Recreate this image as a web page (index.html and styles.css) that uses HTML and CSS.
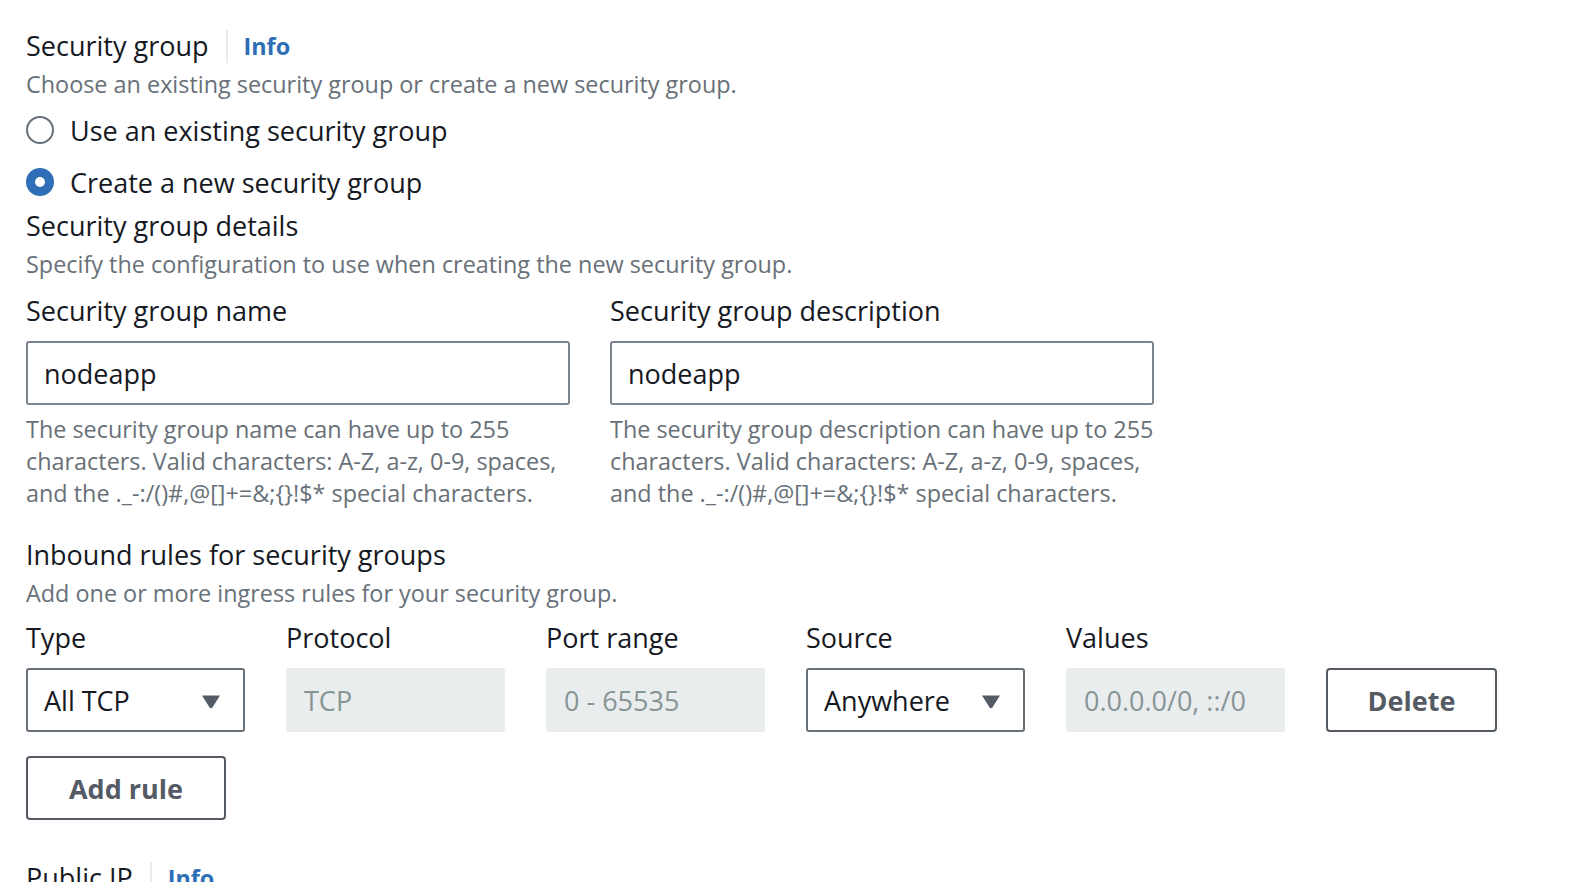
FILE: index.html
```html
<!DOCTYPE html>
<html lang="en">
<head>
<meta charset="utf-8">
<title>Security group</title>
<link rel="stylesheet" href="styles.css">
</head>
<body>
<main class="form">
  <section class="field">
    <div class="field-header">
      <span class="label">Security group</span>
      <span class="sep"></span>
      <a class="info">Info</a>
    </div>
    <p class="desc">Choose an existing security group or create a new security group.</p>
    <div class="radios">
      <label class="radio"><span class="dot"></span><span>Use an existing security group</span></label>
      <label class="radio checked"><span class="dot"></span><span>Create a new security group</span></label>
    </div>
  </section>

  <section class="group">
    <div class="label">Security group details</div>
    <p class="desc">Specify the configuration to use when creating the new security group.</p>
    <div class="pair">
      <div class="col">
        <div class="label">Security group name</div>
        <div class="input">nodeapp</div>
        <p class="desc constraint">The security group name can have up to 255 characters. Valid characters: A-Z, a-z, 0-9, spaces, and the ._-:/()#,@[]+=&amp;;{}!$* special characters.</p>
      </div>
      <div class="col">
        <div class="label">Security group description</div>
        <div class="input">nodeapp</div>
        <p class="desc constraint">The security group description can have up to 255 characters. Valid characters: A-Z, a-z, 0-9, spaces, and the ._-:/()#,@[]+=&amp;;{}!$* special characters.</p>
      </div>
    </div>
  </section>

  <section class="rules">
    <div class="label">Inbound rules for security groups</div>
    <p class="desc">Add one or more ingress rules for your security group.</p>
    <div class="rule-grid">
      <div class="label">Type</div>
      <div class="label">Protocol</div>
      <div class="label">Port range</div>
      <div class="label">Source</div>
      <div class="label">Values</div>
      <div></div>
      <div class="select">All TCP<svg class="caret" viewBox="0 0 20 15"><path d="M1 1.5h18l-7.6 12a1.6 1.6 0 0 1-2.8 0z"/></svg></div>
      <div class="disabled">TCP</div>
      <div class="disabled">0 - 65535</div>
      <div class="select">Anywhere<svg class="caret" viewBox="0 0 20 15"><path d="M1 1.5h18l-7.6 12a1.6 1.6 0 0 1-2.8 0z"/></svg></div>
      <div class="disabled">0.0.0.0/0, ::/0</div>
      <button class="btn">Delete</button>
    </div>
    <button class="btn add">Add rule</button>
  </section>

  <section class="field public">
    <div class="field-header">
      <span class="label">Public IP</span>
      <span class="sep"></span>
      <a class="info">Info</a>
    </div>
  </section>
</main>
</body>
</html>
```
FILE: styles.css
```css
* { box-sizing: border-box; }
html, body { margin: 0; padding: 0; background: #fff; }
body {
  font-family: "Open Sans", "Noto Sans", sans-serif;
  color: #16191f;
  overflow: hidden;
  height: 882px;
}
.form { padding: 24px 26px 0 26px; }
p { margin: 0; }

.label { font-size: 27px; line-height: 44px; color: #16191f; }
.desc { font-size: 23.4px; line-height: 32px; color: #687078; }

.field-header { display: flex; align-items: center; height: 44px; }
.sep { width: 2px; height: 33px; background: #e9ebed; margin: 0 16px 0 17px; }
.info { font-size: 23.4px; font-weight: 700; color: #2d6fb7; text-decoration: none; }

.radios { display: flex; flex-direction: column; gap: 8px; margin-top: 8px; }
.radio { display: flex; align-items: center; height: 44px; font-size: 27px; }
.dot {
  width: 28px; height: 28px; border-radius: 50%;
  border: 2.5px solid #687078; margin-right: 16px; flex: none;
}
.radio.checked .dot { border: 9px solid #2e6fb7; background: #fff; }

.pair { display: grid; grid-template-columns: 544px 544px; column-gap: 40px; margin-top: 9px; }
.col .input { margin-top: 8px; }
.input {
  height: 64px; border: 2px solid #7d858e; border-radius: 3px;
  display: flex; align-items: center; padding: 0 16px;
  font-size: 27px;
}
.constraint { margin-top: 8px; }

.rules { margin-top: 24px; }
.rule-grid {
  display: grid;
  grid-template-columns: 219px 219px 219px 219px 219px 171px;
  column-gap: 41px; row-gap: 8px;
  margin-top: 7px;
}
.select, .disabled {
  height: 64px; border-radius: 3px; display: flex; align-items: center;
  padding: 0 16px; font-size: 27px; border: 2px solid transparent;
}
.select { border-color: #687078; justify-content: space-between; padding-right: 22px; }
.caret { width: 20px; height: 15px; fill: #545b64; margin-top: 2px; }
.disabled { background: #eaeded; color: #879596; }

.btn {
  height: 64px; border: 2px solid #545b64; border-radius: 4px; background: #fff;
  font-family: inherit; font-size: 27px; font-weight: 700; color: #545b64;
  padding: 0; cursor: pointer;
}
.add { width: 200px; margin-top: 24px; display: block; }

.public { margin-top: 36px; }
```
